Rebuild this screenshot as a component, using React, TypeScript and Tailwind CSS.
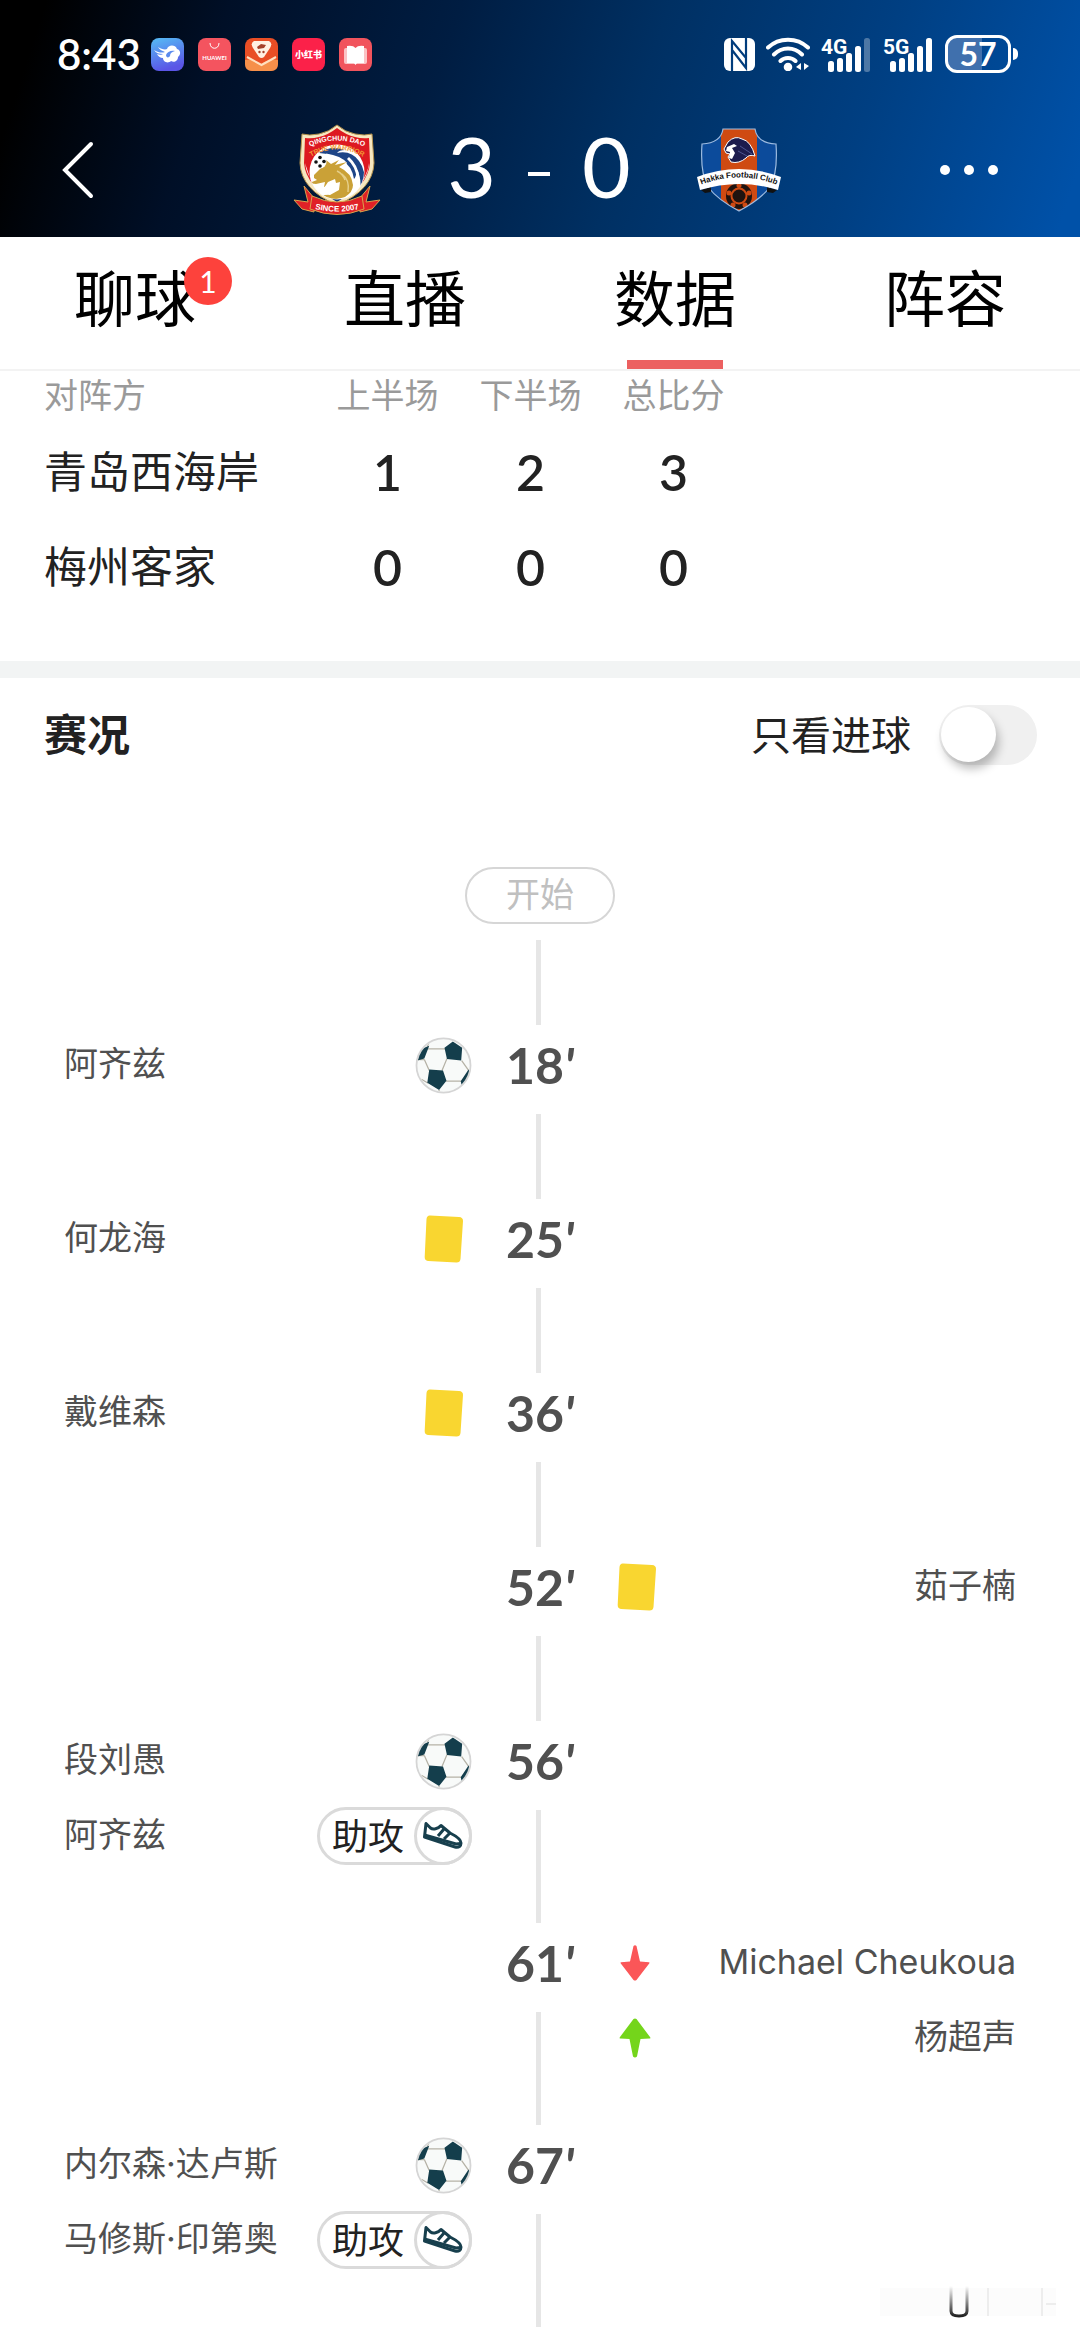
import { useState } from "react";

type Kind = "goal" | "assist" | "yellow" | "off" | "on";

type MatchEvent = {
  minute: number;
  side: "home" | "away";
  items: { player: string; kind: Kind }[];
};

const tabs = [
  { label: "聊球", badge: 1 },
  { label: "直播" },
  { label: "数据" },
  { label: "阵容" },
];

const scores = [
  { team: "青岛西海岸", values: [1, 2, 3] },
  { team: "梅州客家", values: [0, 0, 0] },
];

const events: MatchEvent[] = [
  { minute: 18, side: "home", items: [{ player: "阿齐兹", kind: "goal" }] },
  { minute: 25, side: "home", items: [{ player: "何龙海", kind: "yellow" }] },
  { minute: 36, side: "home", items: [{ player: "戴维森", kind: "yellow" }] },
  { minute: 52, side: "away", items: [{ player: "茹子楠", kind: "yellow" }] },
  {
    minute: 56,
    side: "home",
    items: [
      { player: "段刘愚", kind: "goal" },
      { player: "阿齐兹", kind: "assist" },
    ],
  },
  {
    minute: 61,
    side: "away",
    items: [
      { player: "Michael Cheukoua", kind: "off" },
      { player: "杨超声", kind: "on" },
    ],
  },
  {
    minute: 67,
    side: "home",
    items: [
      { player: "内尔森·达卢斯", kind: "goal" },
      { player: "马修斯·印第奥", kind: "assist" },
    ],
  },
];

export default function App() {
  const [activeTab, setActiveTab] = useState("数据");
  const [goalsOnly, setGoalsOnly] = useState(false);

  const shown = goalsOnly
    ? events.filter((e) => e.items.some((i) => i.kind === "goal"))
    : events;

  return (
    <div className="relative min-h-screen bg-white font-['Lato','Noto_Sans_CJK_SC',sans-serif] text-[#222]">
      <header className="bg-[linear-gradient(108deg,#000_4%,#000f27_20%,#001d42_40%,#003063_58%,#003f82_78%,#0051a8_98%)] text-white">
        <StatusBar />
        <ScoreBar />
      </header>

      {/* Tabs */}
      <nav className="grid h-[134px] grid-cols-4 border-b-2 border-[#f3f3f3]">
        {tabs.map((tab) => (
          <button
            key={tab.label}
            onClick={() => setActiveTab(tab.label)}
            className="flex flex-col items-center justify-between text-[61px] text-black"
          >
            <span className="relative flex h-[123px] items-center leading-none">
              {tab.label}
              {tab.badge && (
                <span className="absolute top-5 -right-[36px] flex size-12 items-center justify-center rounded-full bg-[#fd423c] text-[30px] text-white">
                  {tab.badge}
                </span>
              )}
            </span>
            <span className={`h-[9px] w-24 ${activeTab === tab.label ? "bg-[#ec6060]" : ""}`} />
          </button>
        ))}
      </nav>

      {/* Score by half */}
      <section className="pb-[46px] pl-11">
        <table className="table-fixed border-collapse">
          <thead>
            <tr className="h-[54px] align-top text-[34px] leading-[48px] text-[#9a9a9a]">
              <th className="w-[272px] text-left font-normal">对阵方</th>
              <th className="w-[143px] font-normal">上半场</th>
              <th className="w-[143px] font-normal">下半场</th>
              <th className="w-[143px] font-normal">总比分</th>
            </tr>
          </thead>
          <tbody>
            {scores.map((row) => (
              <tr key={row.team} className="h-[95px]">
                <th className="text-left text-[43px] font-normal">{row.team}</th>
                {row.values.map((value, i) => (
                  <td key={i} className="text-center text-[50px] font-semibold">
                    {value}
                  </td>
                ))}
              </tr>
            ))}
          </tbody>
        </table>
      </section>

      <div className="h-[17px] bg-[#f2f4f4]" />

      {/* Timeline */}
      <section>
        <div className="flex h-[114px] items-center justify-between pr-[43px] pl-11">
          <h2 className="text-[43px] font-bold">赛况</h2>
          <label className="flex cursor-pointer items-center gap-[28px] text-[40px]">
            只看进球
            <input
              type="checkbox"
              role="switch"
              checked={goalsOnly}
              onChange={(e) => setGoalsOnly(e.target.checked)}
              className="peer sr-only"
            />
            <span className="flex h-[60px] w-[98px] items-start rounded-full bg-[#f0f0f0] p-[2px] peer-checked:justify-end peer-checked:bg-[#ec6060]">
              <span className="size-[55px] rounded-full bg-white shadow-[3px_7px_10px_rgba(0,0,0,0.25)]" />
            </span>
          </label>
        </div>

        <div className="flex flex-col items-center pt-[75px]">
          <span className="flex h-[57px] w-[150px] items-center justify-center rounded-full border-2 border-[#d6d6d6] pb-[3px] text-[34px] leading-none text-[#c0c0c0]">
            开始
          </span>
          <span className="mt-4 mr-1 h-[85px] w-[5px] bg-[#e6e6e6]" />
        </div>

        <ol>
          {shown.map((event) => (
            <EventRow key={event.minute} event={event} />
          ))}
        </ol>
      </section>

      <Watermark />
    </div>
  );
}

function EventRow({ event }: { event: MatchEvent }) {
  const isHome = event.side === "home";

  return (
    <li
      className={`grid grid-cols-[1fr_136px_1fr] ${event.items.length > 1 ? "h-[202px]" : "h-[174px]"}`}
    >
      <div className="pl-16">{isHome && <EventItems event={event} />}</div>
      <div className="flex flex-col items-center">
        <time className="flex h-20 items-center text-[50px] leading-none font-bold text-[#505050]">
          {event.minute}
          <span className="italic">'</span>
        </time>
        <span className="mt-[9px] mr-1 w-[5px] flex-1 bg-[#e6e6e6]" />
      </div>
      <div className="pr-16">{!isHome && <EventItems event={event} />}</div>
    </li>
  );
}

function EventItems({ event }: { event: MatchEvent }) {
  return (
    <>
      {event.items.map((item, i) => (
        <div
          key={item.player}
          className={`flex items-center justify-between text-[34px] leading-none text-[#505050] ${
            i === 0 ? "h-20" : "h-[70px]"
          } ${event.side === "home" ? "flex-row" : "flex-row-reverse"}`}
        >
          <span className="pb-[3px] font-['Inter','Noto_Sans_CJK_SC',sans-serif] whitespace-nowrap">
            {item.player}
          </span>
          <EventIcon kind={item.kind} />
        </div>
      ))}
    </>
  );
}

function EventIcon({ kind }: { kind: Kind }) {
  if (kind === "assist") {
    return (
      <span className="flex h-[58px] items-center rounded-full border-[3px] border-[#dadada] pl-3 text-[36px] text-[#222]">
        助攻
        <span className="-my-[3px] -mr-[3px] ml-[10px] flex size-[58px] items-center justify-center rounded-full border-[3px] border-[#dadada]">
          <svg viewBox="0 0 40 28" className="h-7 w-10" fill="none" stroke="#173f4d" strokeWidth="3" strokeLinejoin="round">
            <path d="M3 1.5 1.5 15 32 25c4 1 6-1 6-4 0-4-5-7-11-10L18 3.5C15 7 10 8 7.500 6z" fill="#fff" />
            <path d="M1.500 13 33 22l4.500-.5" />
            <path d="m15 14 6-7m0 10 6-6" strokeWidth="3" />
          </svg>
        </span>
      </span>
    );
  }

  return (
    <span className="flex size-[57px] items-center justify-center">
      {kind === "goal" && (
        <svg viewBox="0 0 57 58" className="size-full">
          <defs>
            <clipPath id="ball">
              <circle cx="28.500" cy="29" r="26.500" />
            </clipPath>
          </defs>
          <circle cx="28.500" cy="29" r="27.500" fill="#f8faf9" stroke="#d5d5d5" strokeWidth="1.800" />
          <g clipPath="url(#ball)">
            <path
              d="M12 12h18M9 23l5 11M32 22l-5 12M31 45h16M47 24l7 10M14 5l-2 5M2 23h7M13 47 6 43M24 54v4"
              fill="none"
              stroke="#b5b2a6"
              strokeWidth="1.300"
            />
            <path
              d="M38 4.500 47.500 11 46.500 24 32 22.500 29.500 11zM14 33 28 34 31.500 44.500 24 54 12 46.500zM4 13 14 9 9 22 2 24zM54 33 46 45l1 4 10-8z"
              fill="#143e4c"
            />
          </g>
        </svg>
      )}
      {kind === "yellow" && (
        <svg viewBox="0 0 40 48" className="h-12 w-10">
          <path
            d="M6 .5 35 2q4 .3 4 4L36.500 44q-.4 3.500-4 3.500L4 46Q.5 45.500.7 42L2.500 4Q3 .3 6 .5z"
            fill="#f9d630"
          />
        </svg>
      )}
      {kind === "off" && (
        <svg viewBox="0 0 30 36" className="mr-1 h-9 w-[30px]">
          <path d="M13.500 1q1.500-1.500 3 0L20 16.500l9 .7q1 .5 0 1.500L16.500 35q-1.500 1.200-3 0L1 18.700q-1-1 0-1.500l9-.7z" fill="#fb5658" />
        </svg>
      )}
      {kind === "on" && (
        <svg viewBox="0 0 32 40" className="mr-1 h-10 w-8">
          <path d="M14.500 1q1.500-1.200 3 0L31 19q1 1.500-.5 1.500L21.500 21 18 38.500q-2 2-4 0L10.500 21 1.500 20.500Q0 20.500 1 19z" fill="#74d51b" />
        </svg>
      )}
    </span>
  );
}

function StatusBar() {
  return (
    <div className="flex h-[108px] items-center justify-between pr-[62px] pl-[57px]">
      <div className="flex items-center gap-[14px]">
        <span className="-mr-1 text-[42px] leading-none font-semibold">8:43</span>
        <AppIcons />
      </div>
      <div className="flex items-center gap-[11px]">
        <svg viewBox="0 0 31 33" className="h-[33px] w-[31px]">
          <rect width="31" height="33" rx="6" fill="#fff" />
          <path d="M8 33V3l14 17V0M8 12l14 18V12" fill="none" stroke="#003c7c" strokeWidth="2.200" />
        </svg>
        <svg viewBox="0 0 44 34" className="h-[34px] w-11" fill="none" stroke="#fff" strokeWidth="4" strokeLinecap="round">
          <path d="M2 10.500c11-10.500 29-10.500 40 0M8 17.500c8-8 20-8 28 0M14.500 24c4-4 11-4 15 0" />
          <circle cx="22" cy="30" r="2.300" fill="#fff" />
          <path d="M35 26v7l-5-3zM38 26v7l5-4z" fill="#fff" stroke="none" />
        </svg>
        <Signal label="4G" bars={4} />
        <Signal label="5G" bars={5} />
        <span className="flex items-center gap-[2px]">
          <span className="flex h-[38px] w-[66px] items-center justify-center rounded-[12px] border-[3px] border-white bg-[linear-gradient(90deg,#4070ad_57%,transparent_57%)] text-[32px] leading-none font-bold">
            57
          </span>
          <span className="h-3 w-[5px] rounded-r-full bg-white" />
        </span>
      </div>
    </div>
  );
}

function Signal({ label, bars }: { label: string; bars: number }) {
  const heights = [11, 14, 19, 26, 34];

  return (
    <svg viewBox="0 0 51 47" className="h-[47px] w-[51px]" fill="#fff">
      <text x="0" y="23" fontSize="21" fontWeight="700" fontFamily="'Roboto','Liberation Sans',sans-serif">
        {label}
      </text>
      {heights.map((h, i) => (
        <rect key={h} x={7 + i * 9} y={41 - h} width="6" height={h} rx="2.500" opacity={i < bars ? 1 : 0.3} />
      ))}
    </svg>
  );
}

function AppIcons() {
  return (
    <>
      <svg viewBox="0 0 33 33" className="size-[33px]">
        <defs>
          <linearGradient id="sky" x1="0" y1="0" x2="0.3" y2="1">
            <stop offset="0" stopColor="#55bdf5" />
            <stop offset="1" stopColor="#5a55e6" />
          </linearGradient>
        </defs>
        <rect width="33" height="33" rx="8" fill="url(#sky)" />
        <path d="M3 12c5 3 8 3 11 2-3-1-6-3-7-5 3 2 7 3 9 2 1-4 8-5 10 0 4 1 4 6 1 8 0 4-4 6-7 4-3 3-8 1-8-3-3 0-5-2-6-4 2 1 5 1 6 0-4 0-7-1-9-4z" fill="#fff" />
        <path d="M15 17c1-3 5-5 9-4-3 1-5 2-5 5-1 2-4 2-4-1z" fill="#5b8bee" />
      </svg>
      <svg viewBox="0 0 33 33" className="size-[33px]">
        <rect width="33" height="33" rx="8" fill="#f4545f" />
        <path d="M12 5c0 7 9 7 9 0" fill="none" stroke="#fff" strokeWidth="1" />
        <text x="16.500" y="21.500" fill="#fff" fontSize="6" fontWeight="700" textAnchor="middle">
          HUAWEI
        </text>
      </svg>
      <svg viewBox="0 0 33 33" className="size-[33px]">
        <rect width="33" height="33" rx="8" fill="#e94e25" />
        <path d="M0 22q8-2 16 4 9-6 17-4v4q0 7-7 7H7q-7 0-7-7z" fill="#f6904a" />
        <path d="m2 19 14.500 8L31 19" fill="none" stroke="#ffe0c0" strokeWidth="2" />
        <path d="M9 3h15q4 2 1 7l-6 9q-2.500 2-5 0L8 10Q5 5 9 3z" fill="#fff1e2" />
        <path d="m12 9 4-3 5 1-2 3-6 1z" fill="#a4412a" />
        <circle cx="14.500" cy="14" r="1.200" fill="#a4412a" />
        <circle cx="18.500" cy="14" r="1.200" fill="#a4412a" />
      </svg>
      <svg viewBox="0 0 33 33" className="size-[33px]">
        <rect width="33" height="33" rx="8" fill="#fb2149" />
        <text x="16.500" y="20" fill="#fff" fontSize="9" fontWeight="900" textAnchor="middle">
          小红书
        </text>
      </svg>
      <svg viewBox="0 0 33 33" className="size-[33px]">
        <rect width="33" height="33" rx="8" fill="#f1545d" />
        <rect x="5" y="10" width="23" height="16" rx="2" fill="#fbc3c5" />
        <path d="M8 8q6-1 8.500 2Q19 7 25 8v17h-7l-1.500 2-1.500-2H8z" fill="#fff" />
      </svg>
    </>
  );
}

function ScoreBar() {
  return (
    <div className="flex h-[129px] items-center justify-between px-[62px] pb-[6px]">
      <button aria-label="返回" className="flex w-[72px] justify-start">
        <svg viewBox="0 0 32 58" className="h-[58px] w-8" fill="none" stroke="#fff" strokeWidth="4" strokeLinecap="round">
          <path d="M29 3 3 29l26 26" />
        </svg>
      </button>
      <div className="flex items-center">
        <HomeCrest />
        <div className="flex w-[314px] items-center justify-center gap-8 pb-2 text-[84px] leading-none">
          <span>3</span>
          <span className="mt-4 h-1 w-[22px] bg-white" />
          <span>0</span>
        </div>
        <AwayCrest />
      </div>
      <button aria-label="更多" className="flex w-[78px] gap-[14px]">
        <span className="size-[10px] shrink-0 rounded-full bg-white" />
        <span className="size-[10px] shrink-0 rounded-full bg-white" />
        <span className="size-[10px] shrink-0 rounded-full bg-white" />
      </button>
    </div>
  );
}

function HomeCrest() {
  return (
    <svg viewBox="0 0 90 92" className="h-[92px] w-[90px]">
      <defs>
        <clipPath id="disc">
          <circle cx="45" cy="48" r="27" />
        </clipPath>
        <path id="arc-top" d="M17 23q28-13 56 0" />
        <path id="arc-mid" d="M17 34q28-17 56 0" />
        <path id="arc-ribbon" d="M19 84q26 7 52 0" />
      </defs>
      <path d="M2 76 16 78 12 62 22 74v14L14 86l-4-1zM88 76l-14 2 4-16-10 12v14l8-2 4-1z" fill="#e02127" stroke="#d9a44c" strokeWidth="1" />
      <path d="M45 1q8 7 18 9 10 2 17 0l2 29q-1 27-37 42Q9 66 8 39l2-29q7 2 17 0Q37 8 45 1z" fill="#f6e7c0" stroke="#b5924c" strokeWidth="1" />
      <path d="M45 4q9 7 18 9 7 2 14 1l1 25q-2 24-33 38Q14 63 12 39l1-25q7 1 14-1 9-2 18-9z" fill="#dd1921" />
      <path d="M13 39q3 24 32 38 29-14 32-38 0 8-6 18L45 70 19 57z" fill="#fff" />
      <path d="M29 68q16 8 32 0L45 78z" fill="#183b7c" />
      <circle cx="45" cy="48" r="27.500" fill="#fff" />
      <g clipPath="url(#disc)">
        <path d="M27 29q12-8 26-3-6 0-8 3 14-3 22 8 10 13 1 30 2-14-4-23 1 8-2 11-2-13-12-19-10-6-23-7z" fill="#1d4587" />
        <path d="M34 31q14 2 20 9M56 34q9 8 10 20" fill="none" stroke="#fff" strokeWidth="3" />
        <path d="m22 51 8-8 4-7 5 4 8-4-4 5 12-3-8 5q13 6 14 18 0 7-8 12-14 5-25-2 11 1 13-6l-4 2 1-6-6 2 1-5-9 2-7-1 8-3-3-2z" fill="#caa137" />
        <path d="m36 58 7-3 1 4 4-1-1 8-9 5-10-1z" fill="#fff" />
        <path d="M50 50q8 6 6 18M45 47q6 3 8 9" fill="none" stroke="#e6cf8a" strokeWidth="1.500" />
      </g>
      <circle cx="28" cy="38" r="6.500" fill="#fff" />
      <g fill="#111">
        <circle cx="28" cy="33.500" r="1.800" />
        <circle cx="24" cy="38" r="1.800" />
        <circle cx="32" cy="37.500" r="1.800" />
        <circle cx="28" cy="42" r="1.800" />
      </g>
      <path d="M20 72q25 12 50 0l2 13q-27 11-54 0z" fill="#e02127" stroke="#d9a44c" strokeWidth="1" />
      <g fontFamily="'Liberation Sans',sans-serif" fontWeight="700" textAnchor="middle">
        <text fontSize="7" fill="#fff">
          <textPath href="#arc-top" startOffset="50%">QINGCHUN DAO</textPath>
        </text>
        <text fontSize="7" fill="#f29a35">
          <textPath href="#arc-mid" startOffset="50%">TRUE WARRIOR</textPath>
        </text>
        <text fontSize="8" fill="#fff">
          <textPath href="#arc-ribbon" startOffset="50%">SINCE 2007</textPath>
        </text>
      </g>
    </svg>
  );
}

function AwayCrest() {
  return (
    <svg viewBox="0 0 86 84" className="h-[84px] w-[86px]">
      <defs>
        <path id="arc-club" d="M7 56q36-13 72 0" />
        <clipPath id="shield">
          <path d="M27 1h32q2 14 21 15 2 29-6 43-10 13-31 24Q22 72 12 59 4 45 6 16q19-1 21-15z" />
        </clipPath>
      </defs>
      <g clipPath="url(#shield)">
        <rect width="86" height="84" fill="#0c4b9b" />
        <path d="M25 0h36v84H25z" fill="#cf4a12" />
        <circle cx="43" cy="68" r="13" fill="#20130f" />
        <g fill="#cf4a12">
          <circle cx="43" cy="57.500" r="2.500" />
          <circle cx="53" cy="65" r="2.500" />
          <circle cx="49" cy="77" r="2.500" />
          <circle cx="37" cy="77" r="2.500" />
          <circle cx="33" cy="65" r="2.500" />
        </g>
        <circle cx="43" cy="68" r="7.500" fill="none" stroke="#cf4a12" strokeWidth="2" />
      </g>
      <path
        d="M27 1h32q2 14 21 15 2 29-6 43-10 13-31 24Q22 72 12 59 4 45 6 16q19-1 21-15z"
        fill="none"
        stroke="#9dbbe0"
        strokeWidth="1.200"
      />
      <path d="m28 21 4-7q7-7 14-3 9 2 13 17-6-2-9 2-7 6-15 4l-3-5 2-3-4-1z" fill="#1c1c4e" stroke="#fff" strokeWidth="1" />
      <path d="m31 19 7-3 3 2-5 2 3 5-3 6-3-1 1-6-4-1z" fill="#fff" />
      <path d="m44 18 12 8m-14-3 9 5" stroke="#4e5590" strokeWidth="1" />
      <path d="m5 62 10-3v5l-6 1zM81 62l-10-3v5l6 1z" fill="#111" />
      <path d="M1 49q42-16 84 0l-3 13q-39-12-78 0z" fill="#fff" />
      <text fontSize="8" fontWeight="700" fill="#111" textAnchor="middle" fontFamily="'Liberation Sans',sans-serif">
        <textPath href="#arc-club" startOffset="50%">Hakka Football Club</textPath>
      </text>
    </svg>
  );
}

function Watermark() {
  return (
    <svg viewBox="0 0 176 36" className="absolute right-6 bottom-5 h-9 w-44" aria-hidden="true">
      <defs>
        <linearGradient id="fade" x1="0" y1="0" x2="0" y2="1">
          <stop offset="0" stopColor="#333" stopOpacity="0" />
          <stop offset="1" stopColor="#222" />
        </linearGradient>
      </defs>
      <path d="M0 4h176v28H0z" fill="#fcfcfc" />
      <path d="M108 4v28M162 4v28M166 20h10" stroke="#ededed" strokeWidth="2" />
      <path d="M71 2v25q0 5 8 5t8-5V2" fill="none" stroke="url(#fade)" strokeWidth="3" />
    </svg>
  );
}
